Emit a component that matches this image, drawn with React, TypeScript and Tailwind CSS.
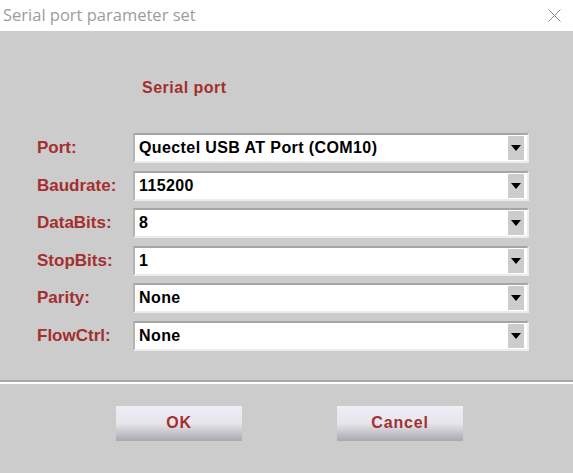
import React from "react";

const fields = [
  { label: "Port:", value: "Quectel USB AT Port (COM10)" },
  { label: "Baudrate:", value: "115200" },
  { label: "DataBits:", value: "8" },
  { label: "StopBits:", value: "1" },
  { label: "Parity:", value: "None" },
  { label: "FlowCtrl:", value: "None" },
];

function Combo({ value }: { value: string }) {
  return (
    <div className="flex h-[30px] w-[396px] items-center border-2 border-t-[#a5a5a5] border-l-[#b4b4b4] border-r-[#ececec] border-b-[#ececec] bg-white pl-[4px] pr-[3px]">
      <span className="flex-1 text-[16px] font-bold leading-none tracking-[0.4px] text-black">{value}</span>
      <div className="flex h-[24px] w-[16px] items-center justify-center bg-[#cccccc]">
        <svg width="10" height="6" viewBox="0 0 10 6">
          <path d="M0 0h10L5 6z" fill="#000" />
        </svg>
      </div>
    </div>
  );
}

function DlgButton({ text }: { text: string }) {
  return (
    <button className="h-[35px] w-[126px] bg-gradient-to-b from-[#efeef6] via-[#e6e5ec] to-[#a9a8b0] text-[16px] font-bold tracking-[0.8px] text-[#a42f2f]">
      {text}
    </button>
  );
}

export default function App() {
  return (
    <div
      className="flex h-[473px] w-[573px] flex-col bg-[#cccccc]"
      style={{ fontFamily: "'Liberation Sans', Arial, sans-serif" }}
    >
      <div className="flex h-[31px] items-center justify-between bg-white pl-[3px] pr-[12px]">
        <span
          className="text-[16.5px] text-[#9c9c9c]"
          style={{ fontFamily: "'Open Sans', 'Noto Sans', sans-serif" }}
        >
          Serial port parameter set
        </span>
        <svg width="13" height="13" viewBox="0 0 13 13">
          <path d="M0.5 0.5L12.5 12.5M12.5 0.5L0.5 12.5" stroke="#8a8a8a" strokeWidth="1" />
        </svg>
      </div>

      <div className="pl-[142px] pt-[48px] text-[16px] font-bold leading-[18px] tracking-[0.5px] text-[#a42f2f]">
        Serial port
      </div>

      <div className="mt-[36px] flex flex-col gap-[7.6px] pl-[37px]">
        {fields.map((f) => (
          <div key={f.label} className="flex items-center">
            <span className="w-[96px] text-[17px] font-bold leading-[20px] text-[#a42f2f]">{f.label}</span>
            <Combo value={f.value} />
          </div>
        ))}
      </div>

      <div className="mt-[29px] h-[2px] bg-[#a8a8a8]" />
      <div className="h-[2px] bg-white" />

      <div className="mt-[22px] flex gap-[95px] pl-[116px]">
        <DlgButton text="OK" />
        <DlgButton text="Cancel" />
      </div>
    </div>
  );
}
